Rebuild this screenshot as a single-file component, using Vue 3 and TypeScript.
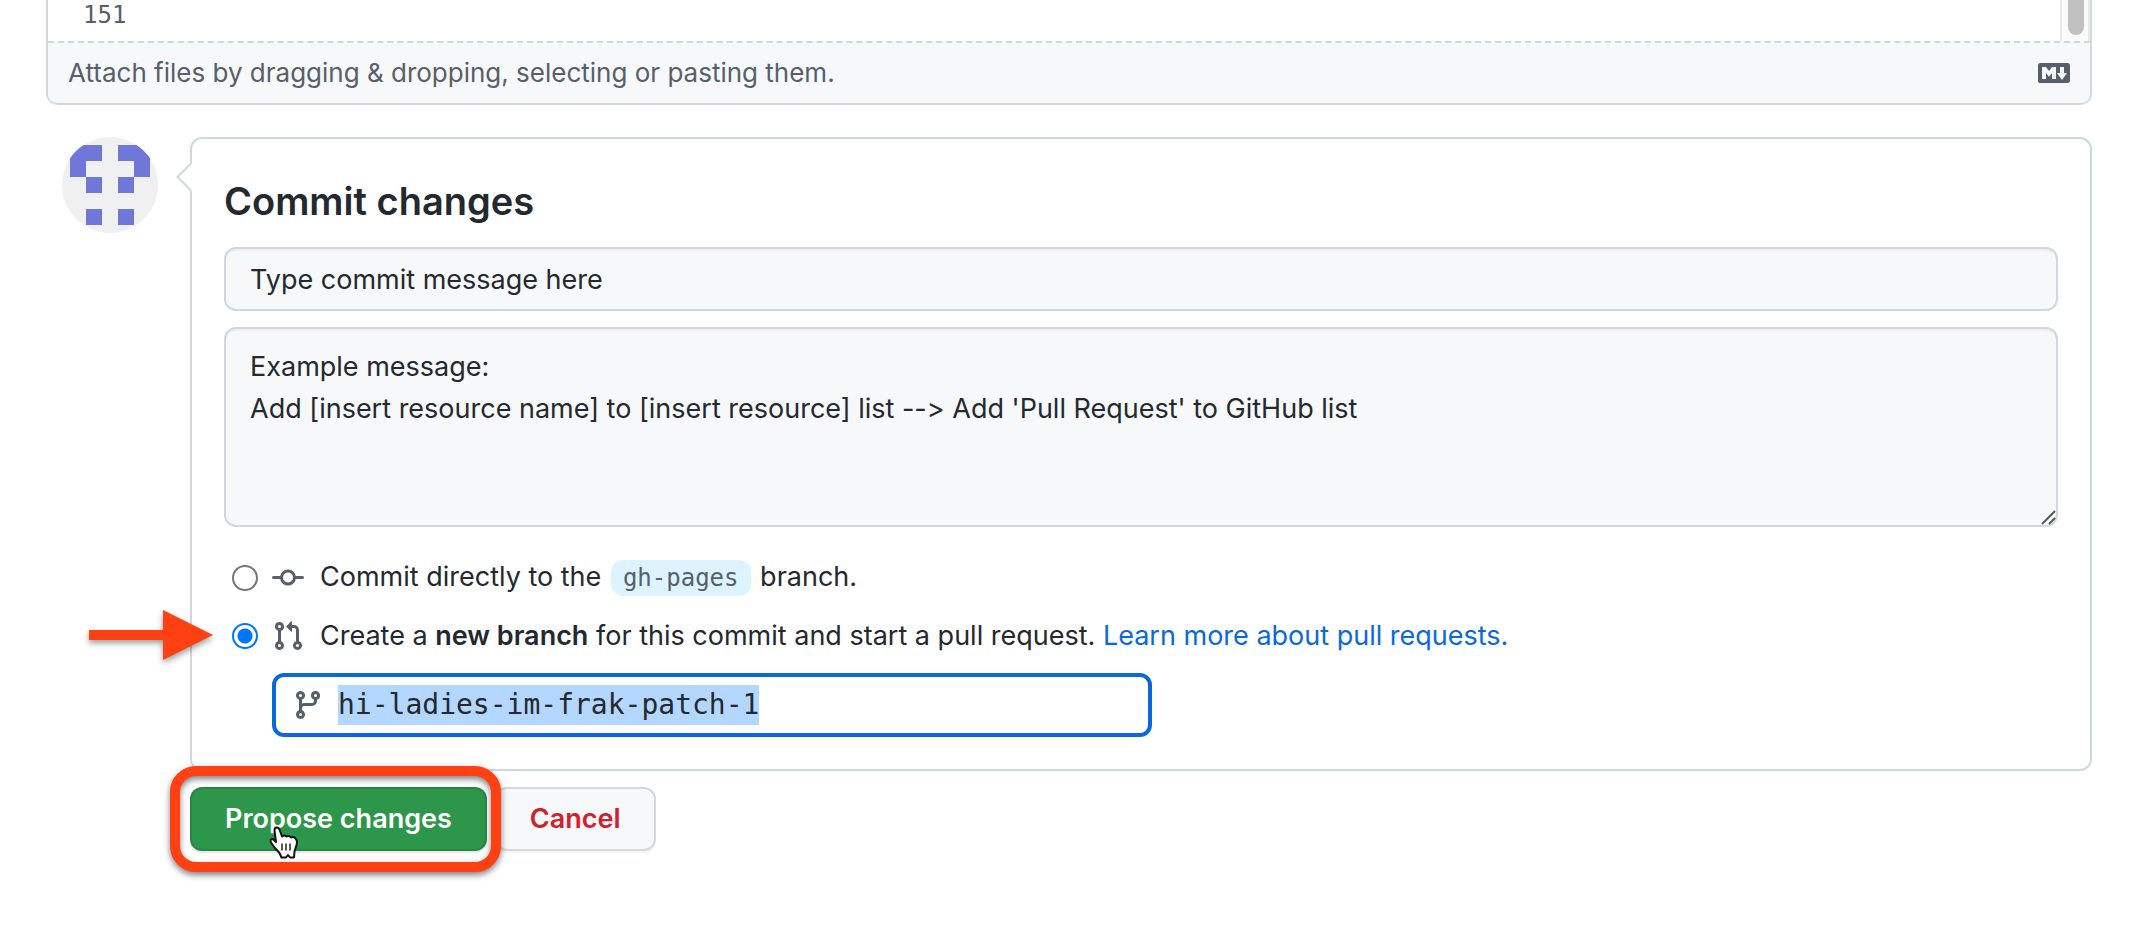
<script setup lang="ts">
import { onMounted, ref } from 'vue'

type Target = 'direct' | 'branch'

const title = ref('')
const description = ref(
  "Example message:\nAdd [insert resource name] to [insert resource] list --> Add 'Pull Request' to GitHub list",
)
const target = ref<Target>('branch')
const branchName = ref('hi-ladies-im-frak-patch-1')
const branchInput = ref<HTMLInputElement | null>(null)

// Filled cells of the 5x5 identicon, as [column, row]
const cells: [number, number][] = [
  [0, 0], [1, 0], [3, 0], [4, 0],
  [0, 1], [4, 1],
  [1, 2], [3, 2],
  [1, 4], [3, 4],
]

onMounted(() => {
  branchInput.value?.focus()
  branchInput.value?.select()
})
</script>

<template>
  <main class="page">
    <section class="editor">
      <div class="code">
        <span class="line-number">151</span>
        <div class="scrollbar"><div class="thumb"></div></div>
      </div>
      <div class="attach">
        <span>Attach files by dragging &amp; dropping, selecting or pasting them.</span>
        <a class="markdown" href="#" aria-label="Styling with Markdown is supported">
          <svg viewBox="0 0 16 16" width="32" height="32" fill="currentColor">
            <path d="M14.85 3c.63 0 1.15.52 1.14 1.15v7.7c0 .63-.51 1.15-1.15 1.15H1.15C.52 13 0 12.48 0 11.84V4.15C0 3.52.52 3 1.15 3ZM9 11V5H7L5.5 7 4 5H2v6h2V8l1.5 1.92L7 8v3Zm2.99.5L14.5 8H13V5h-2v3H9.5Z" />
          </svg>
        </a>
      </div>
    </section>

    <form class="commit" @submit.prevent>
      <svg class="avatar" viewBox="0 0 96 96" role="img" aria-label="Your avatar">
        <defs>
          <clipPath id="avatar-clip"><circle cx="48" cy="48" r="48" /></clipPath>
        </defs>
        <g clip-path="url(#avatar-clip)">
          <rect width="96" height="96" fill="#f0f0f0" />
          <rect
            v-for="([col, row], i) in cells"
            :key="i"
            :x="8 + col * 16"
            :y="8 + row * 16"
            width="16"
            height="16"
            fill="#7077d9"
          />
        </g>
      </svg>

      <div class="main">
        <div class="card">
          <svg class="caret" viewBox="0 0 16 28" width="16" height="28" aria-hidden="true">
            <path d="M16 0v28L1.500 14z" fill="#fff" />
            <path d="M15 .500L1.500 14 15 27.500" fill="none" stroke="#d0d7de" stroke-width="2" />
          </svg>
          <h1>Commit changes</h1>
          <input v-model="title" class="field title" type="text" placeholder="Type commit message here" aria-label="Commit message" />
          <div class="resizable">
            <textarea v-model="description" class="field description" aria-label="Extended description"></textarea>
            <svg class="grip" viewBox="0 0 16 16" width="16" height="16" aria-hidden="true">
              <path d="M2 15L15 2M9 15l6-6" stroke="#5a5a5a" stroke-width="2" fill="none" />
            </svg>
          </div>

          <div class="options">
            <div class="option">
              <input id="target-direct" v-model="target" type="radio" name="target" value="direct" />
              <svg class="icon" viewBox="0 0 16 16" width="32" height="32" fill="currentColor" aria-hidden="true">
                <path fill-rule="evenodd" d="M10.5 7.75a2.5 2.5 0 11-5 0 2.5 2.5 0 015 0zm1.43.75a4.002 4.002 0 01-7.86 0H.75a.75.75 0 110-1.500h3.320a4.001 4.001 0 017.860 0h3.320a.75.75 0 110 1.500h-3.320z" />
              </svg>
              <label for="target-direct">Commit directly to the <code>gh-pages</code> branch.</label>
            </div>

            <div class="option">
              <svg class="arrow" viewBox="0 0 136 60" width="136" height="60" aria-hidden="true">
                <path d="M12 20h74V0l50 25-50 25V30H12z" fill="#ff4013" />
              </svg>
              <input id="target-branch" v-model="target" type="radio" name="target" value="branch" />
              <svg class="icon" viewBox="0 0 16 16" width="32" height="32" fill="currentColor" aria-hidden="true">
                <path fill-rule="evenodd" d="M7.177 3.073L9.573.677A.25.25 0 0110 .854v4.792a.25.25 0 01-.427.177L7.177 3.427a.25.25 0 010-.354zM3.75 2.5a.75.75 0 100 1.5.75.75 0 000-1.5zm-2.25.75a2.25 2.25 0 113 2.122v5.256a2.251 2.251 0 11-1.5 0V5.372A2.25 2.25 0 011.5 3.25zM11 2.5h-1V4h1a1 1 0 011 1v5.628a2.251 2.251 0 101.5 0V5A2.5 2.5 0 0011 2.5zm1 10.25a.75.75 0 111.5 0 .75.75 0 01-1.5 0zM3.75 12a.75.75 0 100 1.5.75.75 0 000-1.5z" />
              </svg>
              <span>
                <label for="target-branch">Create a <strong>new branch</strong> for this commit and start a pull request.</label>{{ ' ' }}<a href="#">Learn more about pull requests.</a>
              </span>
            </div>
          </div>

          <div class="branch">
            <svg class="icon" viewBox="0 0 16 16" width="32" height="32" fill="currentColor" aria-hidden="true">
              <path fill-rule="evenodd" d="M11.75 2.5a.75.75 0 100 1.5.75.75 0 000-1.5zm-2.25.75a2.25 2.25 0 113 2.122V6A2.5 2.5 0 0110 8.5H6a1 1 0 00-1 1v1.128a2.251 2.251 0 11-1.5 0V5.372a2.25 2.25 0 111.5 0v1.836A2.492 2.492 0 016 7h4a1 1 0 001-1v-.628A2.25 2.25 0 019.5 3.25zM4.25 12a.75.75 0 100 1.5.75.75 0 000-1.5zM3.5 3.25a.75.75 0 111.5 0 .75.75 0 01-1.5 0z" />
            </svg>
            <input ref="branchInput" v-model="branchName" type="text" aria-label="New branch name" spellcheck="false" />
          </div>
        </div>

        <div class="actions">
          <div class="highlighted">
            <button class="button primary" type="submit">Propose changes</button>
            <div class="ring"></div>
            <svg class="pointer" viewBox="0 0 32 34" width="32" height="34" aria-hidden="true">
              <path
                d="M7 2.500Q9.500 0 11.500 3.500L14 10.500Q16.500 8.500 18.500 10.500Q21 9 23 11.500Q26 10 28 13Q29.500 15 28.500 19L26.500 25.500L26 31.500H22L20 29L18 31.500H13.500L11.500 27L6.500 21.500L3 16.500Q1.500 13 5 13L8 16L6.500 5Q6.300 3.500 7 2.500z"
                fill="#fff"
                stroke="#111"
                stroke-width="2"
                stroke-linejoin="round"
              />
              <path d="M14 17.500v7M18 17.500v7M22 17.500v7" stroke="#222" stroke-width="1.500" fill="none" />
            </svg>
          </div>
          <button class="button danger" type="button">Cancel</button>
        </div>
      </div>
    </form>
  </main>
</template>

<style>
body {
  margin: 0;
  background: #fff;
}
</style>

<style scoped>
.page {
  --line: #d0d7de;
  --muted: #57606a;
  --subtle: #f6f8fa;
  --mono: "DejaVu Sans Mono", "Liberation Mono", monospace;
  padding: 0 63px 40px 46px;
  color: #24292f;
  font-family: Inter, "Liberation Sans", sans-serif;
  font-size: 27px;
  line-height: 42px;
  font-variant-ligatures: no-contextual;
}

.page * {
  box-sizing: border-box;
}

.page svg {
  display: block;
  flex: none;
}

a {
  color: #0969da;
  text-decoration: none;
}

.editor {
  border: 2px solid var(--line);
  border-top: 0;
  border-radius: 0 0 12px 12px;
  overflow: hidden;
}

.code {
  display: flex;
  justify-content: space-between;
  height: 41px;
  padding-left: 35px;
}

.line-number {
  color: var(--muted);
  font-family: var(--mono);
  font-size: 24px;
  line-height: 30px;
}

.scrollbar {
  width: 30px;
  padding: 0 6px 6px;
  border: 2px solid #e8e8e8;
  border-width: 0 2px;
  background: #fafafa;
}

.thumb {
  width: 16px;
  height: 35px;
  margin: 0 auto;
  border-radius: 0 0 8px 8px;
  background: #c1c1c1;
}

.attach {
  display: flex;
  align-items: center;
  justify-content: space-between;
  height: 64px;
  padding: 0 20px;
  border-top: 2px dashed var(--line);
  border-bottom: 2px solid var(--line);
  background: var(--subtle);
  color: var(--muted);
  font-size: 26px;
}

.editor {
  border-bottom: 0;
}

.attach {
  border-radius: 0 0 10px 10px;
}

.markdown {
  color: var(--muted);
}

.commit {
  display: flex;
  align-items: flex-start;
  gap: 32px;
  margin-top: 32px;
  padding-left: 16px;
}

.avatar {
  width: 96px;
  height: 96px;
}

.main {
  flex: 1;
  min-width: 0;
}

.card {
  position: relative;
  padding: 32px;
  border: 2px solid var(--line);
  border-radius: 12px;
}

.caret {
  position: absolute;
  top: 24px;
  left: -16px;
}

h1 {
  margin: 4px 0 20px;
  font-size: 38px;
  font-weight: 600;
  line-height: 52px;
}

.field {
  display: block;
  width: 100%;
  padding: 9px 24px;
  border: 2px solid var(--line);
  border-radius: 12px;
  outline: 0;
  background: var(--subtle);
  box-shadow: inset 0 2px 0 rgba(208, 215, 222, 0.2);
  color: inherit;
  font: inherit;
  font-variant-ligatures: inherit;
}

.title {
  height: 64px;
}

.title::placeholder {
  color: inherit;
  opacity: 1;
}

.resizable {
  position: relative;
  margin-top: 16px;
}

.description {
  height: 200px;
  padding-top: 17px;
  resize: vertical;
}

.description::-webkit-resizer {
  background: transparent;
}

.grip {
  position: absolute;
  right: 2px;
  bottom: 2px;
  pointer-events: none;
}

.options {
  display: grid;
  gap: 16px;
  margin-top: 29px;
  padding-left: 8px;
}

.option {
  position: relative;
  display: flex;
  align-items: center;
  gap: 14px;
}

.option .icon {
  margin-right: 2px;
}

.option input {
  flex: none;
  width: 26px;
  height: 26px;
  margin: 0;
  border: 2px solid #767676;
  border-radius: 50%;
  appearance: none;
  background: #fff;
}

.option input:checked {
  border-color: #0075ff;
  background: radial-gradient(circle, #0075ff 7px, #fff 8px);
}

.icon {
  color: var(--muted);
}

strong {
  font-weight: 600;
}

code {
  margin: 0 2px;
  padding: 4px 12px;
  border-radius: 12px;
  background: #ddf4ff;
  color: var(--muted);
  font-family: var(--mono);
  font-size: 24px;
}

.arrow {
  position: absolute;
  top: -5px;
  left: -155px;
  filter: drop-shadow(0 3px 3px rgba(0, 0, 0, 0.4));
}

.branch {
  display: flex;
  align-items: center;
  gap: 14px;
  width: 880px;
  max-width: calc(100% - 48px);
  height: 64px;
  margin-left: 48px;
  margin-top: 16px;
  padding: 0 16px;
  border: 4px solid #0969da;
  border-radius: 12px;
}

.branch input {
  flex: 1;
  min-width: 0;
  height: 40px;
  padding: 0;
  border: 0;
  outline: 0;
  background: transparent;
  color: inherit;
  font-family: var(--mono);
  font-size: 28px;
  line-height: 40px;
}

.branch input::selection {
  background: #b4d7ff;
  color: #24292f;
}

.actions {
  display: flex;
  gap: 8px;
  margin-top: 16px;
}

.highlighted {
  position: relative;
}

.button {
  display: block;
  height: 64px;
  padding: 0 33px;
  border: 2px solid rgba(27, 31, 36, 0.15);
  border-radius: 12px;
  font: inherit;
  font-weight: 600;
}

.primary {
  background: #2c974b;
  box-shadow: 0 2px 0 rgba(27, 31, 36, 0.1);
  color: #fff;
}

.danger {
  background: var(--subtle);
  box-shadow: 0 2px 0 rgba(27, 31, 36, 0.04);
  color: #cf222e;
}

.ring {
  position: absolute;
  inset: -21px -14px -21px -20px;
  z-index: 1;
  border: 10px solid #ff4013;
  border-radius: 26px;
  filter: drop-shadow(0 3px 3px rgba(0, 0, 0, 0.5));
  pointer-events: none;
}

.pointer {
  position: absolute;
  top: 39px;
  left: 78px;
  z-index: 2;
  pointer-events: none;
}
</style>
